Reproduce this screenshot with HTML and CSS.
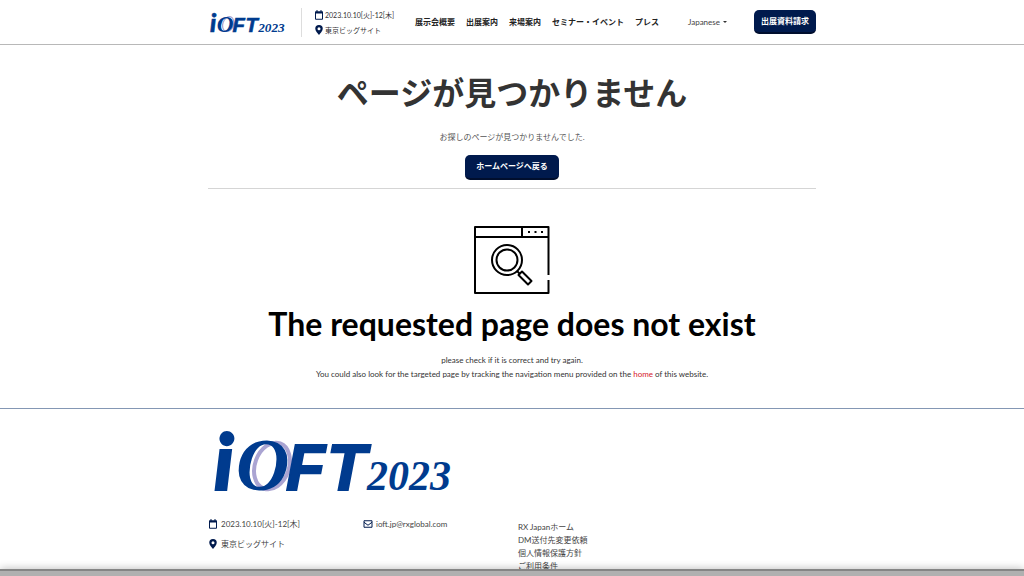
FILE: index.html
```html
<!DOCTYPE html>
<html lang="ja">
<head>
<meta charset="utf-8">
<meta name="viewport" content="width=device-width, initial-scale=1">
<title>ページが見つかりません</title>
<link rel="stylesheet" href="styles.css">
</head>
<body>
<svg class="sprite" aria-hidden="true">
  <symbol id="calendar" viewBox="0 0 18 20">
    <path d="M2 4h14v14.500H2z" fill="none" stroke="currentColor" stroke-width="2"/>
    <path d="M1 3h16v4H1zM4 0h2v4H4zM12 0h2v4h-2z" fill="currentColor"/>
  </symbol>
  <symbol id="pin" viewBox="0 0 18 20">
    <path fill="currentColor" fill-rule="evenodd" d="M9 0a7.500 7.500 0 0 0-7.500 7.500C1.500 12 7 17 9 20c2-3 7.500-8 7.500-12.500A7.500 7.500 0 0 0 9 0zm0 4.500a3 3 0 1 1 0 6 3 3 0 0 1 0-6z"/>
  </symbol>
  <symbol id="mail" viewBox="0 0 20 16">
    <path d="M2 1.500h16v13H2zM2 4.500l8 6 8-6" fill="none" stroke="currentColor" stroke-width="2" stroke-linejoin="round"/>
  </symbol>
</svg>

<header class="site-header">
  <div class="container header-row">
    <a class="logo-link" href="#" aria-label="iOFT 2023">
      <svg class="logo-small" viewBox="0 0 244 64">
        <ellipse cx="64" cy="37" rx="17" ry="24" transform="rotate(20 64 37)" fill="none" stroke="#aaa4d2" stroke-width="4"/>
        <text class="logo-letter logo-i" x="6" y="61">i</text>
        <text class="logo-o" x="28" y="61">O</text>
        <text class="logo-letter" x="78" y="61">F</text>
        <text class="logo-letter" x="119" y="61">T</text>
        <text class="logo-year" x="159" y="61">2023</text>
      </svg>
    </a>
    <ul class="event-info">
      <li><svg class="icon"><use href="#calendar"/></svg>2023.10.10[火]-12[木]</li>
      <li><svg class="icon"><use href="#pin"/></svg>東京ビッグサイト</li>
    </ul>
    <nav class="main-nav">
      <a href="#">展示会概要</a>
      <a href="#">出展案内</a>
      <a href="#">来場案内</a>
      <a href="#">セミナー・イベント</a>
      <a href="#">プレス</a>
    </nav>
    <button class="language" type="button">Japanese</button>
    <a class="button request" href="#">出展資料請求</a>
  </div>
</header>

<main class="container">
  <section class="not-found">
    <h1>ページが見つかりません</h1>
    <p>お探しのページが見つかりませんでした.</p>
    <a class="button" href="#">ホームページへ戻る</a>
  </section>
  <section class="message">
    <svg class="search-art" viewBox="0 0 76 68" fill="none" stroke="#000" stroke-width="2" aria-hidden="true">
      <path d="M74.500 49V1H1v66h73.500V54M1 11h73.500M48 1v10" stroke-linejoin="round"/>
      <circle cx="33" cy="34" r="15"/>
      <circle cx="33" cy="34" r="10.500"/>
      <path d="M43 45l3 3"/>
      <path d="M44.500 49l3.500-3.500 9.500 9.500-3.500 3.500z" stroke-linejoin="round"/>
      <path d="M54 6h2M60.500 6h2M67 6h2"/>
    </svg>
    <h2>The requested page does not exist</h2>
    <p>please check if it is correct and try again.<br>You could also look for the targeted page by tracking the navigation menu provided on the <a href="#">home</a> of this website.</p>
  </section>
</main>

<footer class="site-footer">
  <div class="container">
    <svg class="logo-large" viewBox="0 0 244 64" role="img" aria-label="iOFT 2023">
      <ellipse cx="64" cy="37" rx="17" ry="24" transform="rotate(20 64 37)" fill="none" stroke="#aaa4d2" stroke-width="4"/>
      <text class="logo-letter logo-i" x="6" y="61">i</text>
      <text class="logo-o" x="28" y="61">O</text>
      <text class="logo-letter" x="78" y="61">F</text>
      <text class="logo-letter" x="119" y="61">T</text>
      <text class="logo-year" x="159" y="61">2023</text>
    </svg>
    <div class="footer-columns">
      <ul class="footer-info">
        <li><svg class="icon"><use href="#calendar"/></svg>2023.10.10[火]-12[木]</li>
        <li><svg class="icon"><use href="#pin"/></svg>東京ビッグサイト</li>
      </ul>
      <ul class="footer-info">
        <li><svg class="icon"><use href="#mail"/></svg><a href="mailto:ioft.jp@rxglobal.com">ioft.jp@rxglobal.com</a></li>
      </ul>
      <ul class="footer-links">
        <li><a href="#">RX Japanホーム</a></li>
        <li><a href="#">DM送付先変更依頼</a></li>
        <li><a href="#">個人情報保護方針</a></li>
        <li><a href="#">ご利用条件</a></li>
      </ul>
    </div>
  </div>
</footer>
<div class="bottom-bar"></div>
</body>
</html>
```
FILE: styles.css
```css
* { box-sizing: border-box; }

body {
  margin: 0;
  background: #fff;
  color: #333;
  font: 8px/14px Lato, "Noto Sans CJK JP", sans-serif;
}

a { color: inherit; text-decoration: none; }
ul { margin: 0; padding: 0; list-style: none; }
h1, h2, p { margin: 0; }

.sprite { position: absolute; width: 0; height: 0; }
.container { width: 60%; min-width: 608px; max-width: 1140px; margin: 0 auto; }
@media (max-width: 1024px) { .container { width: 608px; } }

.icon { flex: none; width: 10px; height: 10px; color: #001a4d; }

.logo-letter {
  font: italic 700 64px "Liberation Sans", sans-serif;
  fill: #003b8e;
  stroke: #003b8e;
  stroke-width: 2px;
}
.logo-i { font: italic 900 78px Lato, sans-serif; }
.logo-o { font: italic 700 74px "Liberation Serif", serif; fill: #003b8e; }
.logo-year { font: italic 700 42px "Liberation Serif", serif; fill: #003b8e; }

.site-header { border-bottom: 1px solid #b8b8b8; }
.header-row { display: flex; align-items: center; height: 44px; }
.logo-link { display: block; }
.logo-small { display: block; width: 77px; height: 21px; overflow: visible; }

.event-info {
  display: grid;
  gap: 1px;
  margin-left: 16px;
  padding-left: 12px;
  border-left: 1px solid #ddd;
  font-size: 7px;
}
.event-info li, .footer-info li { display: flex; align-items: center; gap: 1px; white-space: nowrap; }

.main-nav { display: flex; gap: 11px; margin-left: 21px; color: #222; font-weight: 700; white-space: nowrap; }

.language {
  display: flex;
  align-items: center;
  gap: 3px;
  margin-left: auto;
  padding: 0;
  border: 0;
  background: none;
  color: #444;
  font: inherit;
}
.language::after { content: ""; border: 2px solid transparent; border-top-color: #333; border-bottom: 0; }

.button {
  display: inline-block;
  padding: 4px 11px 5px;
  border-bottom: 2px solid #000e2d;
  border-radius: 5px;
  background: #001a4d;
  color: #fff;
  font-weight: 700;
}
.request { margin-left: 27px; padding: 4px 7px; }

.not-found { padding: 27px 0 8px; border-bottom: 1px solid #d5d5d5; text-align: center; }
.not-found h1 { font-size: 32px; line-height: 42px; }
.not-found p { margin: 16px 0 11px; color: #555; }

.message { padding: 37px 0 27px; text-align: center; }
.search-art { display: block; width: 76px; height: 68px; margin: 0 auto 10px; }
.message h2 { color: #000; font-size: 32px; line-height: 40px; }
.message p { margin-top: 9px; }
.message a { color: #d5202c; }

.site-footer { padding: 20px 0 24px; border-top: 1px solid #8497b4; }
.logo-large { display: block; width: 244px; height: 64px; overflow: visible; }
.footer-columns { display: grid; grid-template-columns: 155px 155px 1fr; margin-top: 24px; color: #444; }
.footer-info { display: grid; align-content: start; gap: 6px; }
.footer-info li { gap: 3px; }
.footer-links { padding-top: 4px; line-height: 13px; }

.bottom-bar {
  position: fixed;
  right: 0;
  bottom: 0;
  left: 0;
  height: 7px;
  border-top: 2px solid #858585;
  background: #b0b0b0;
  box-shadow: 0 0 8px rgba(0, 0, 0, 0.3);
}
```
